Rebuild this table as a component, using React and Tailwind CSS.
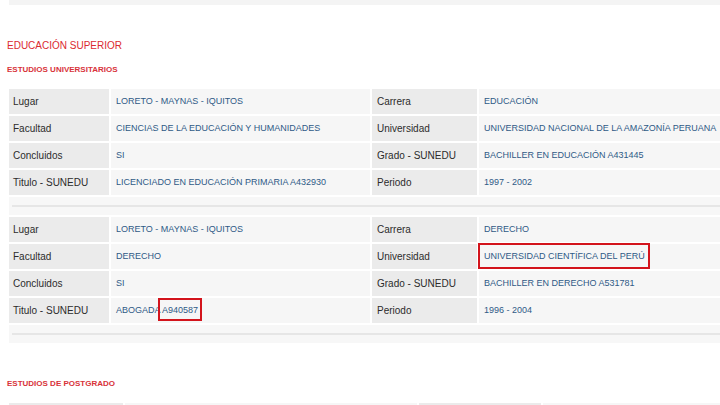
import React from "react";

const Label = ({ children, w, pl = "pl-[5px]" }) => (
  <div className={`${w} shrink-0 h-full bg-[#ebebeb] flex items-center ${pl} text-[10px] text-[#2b2b2b] whitespace-nowrap`}>
    {children}
  </div>
);

const Value = ({ children, w }) => (
  <div className={`${w} shrink-0 h-full bg-[#f6f6f6] flex items-center pl-[5px] text-[9px] text-[#2f5a86] whitespace-nowrap`}>
    {children}
  </div>
);

const Row = ({ l1, v1, l2, v2 }) => (
  <div className="flex gap-[2px] h-[25px]">
    <Label w="w-[100px]" pl="pl-[4px]">{l1}</Label>
    <Value w="w-[259px]">{v1}</Value>
    <Label w="w-[105px]">{l2}</Label>
    <Value w="w-[260px]">{v2}</Value>
  </div>
);

const Sep = () => (
  <div className="h-[18px] bg-[#f7f7f7] flex items-center pl-[3px]">
    <div className="h-[2px] w-full bg-[#e6e6e6]" />
  </div>
);

const Boxed = ({ children, cls }) => (
  <span className="relative">
    {children}
    <span className={`absolute border-2 border-[#d3141c] pointer-events-none ${cls}`} />
  </span>
);

export default function App() {
  return (
    <div className="w-[720px] h-[405px] overflow-hidden bg-white font-['Liberation_Sans',Arial,sans-serif]">
      <div className="ml-[9px] h-[5px] bg-[#f4f4f4]" />
      <div className="pl-[7px] mt-[35px] text-[10px] leading-[12px] text-[#db2a30]">
        EDUCACIÓN SUPERIOR
      </div>
      <div className="pl-[7px] mt-[13px] text-[8px] leading-[10px] font-bold text-[#d8333a]">
        ESTUDIOS UNIVERSITARIOS
      </div>
      <div className="ml-[9px] mt-[14px] flex flex-col gap-[2px]">
        <Row l1="Lugar" v1="LORETO - MAYNAS - IQUITOS" l2="Carrera" v2="EDUCACIÓN" />
        <Row l1="Facultad" v1="CIENCIAS DE LA EDUCACIÓN Y HUMANIDADES" l2="Universidad" v2="UNIVERSIDAD NACIONAL DE LA AMAZONÍA PERUANA" />
        <Row l1="Concluidos" v1="SI" l2="Grado - SUNEDU" v2="BACHILLER EN EDUCACIÓN A431445" />
        <Row l1="Titulo - SUNEDU" v1="LICENCIADO EN EDUCACIÓN PRIMARIA A432930" l2="Periodo" v2="1997 - 2002" />
        <Sep />
        <Row l1="Lugar" v1="LORETO - MAYNAS - IQUITOS" l2="Carrera" v2="DERECHO" />
        <Row
          l1="Facultad"
          v1="DERECHO"
          l2="Universidad"
          v2={<Boxed cls="left-[-6px] right-[-5px] top-[-7px] bottom-[-6px]">UNIVERSIDAD CIENTÍFICA DEL PERÚ</Boxed>}
        />
        <Row l1="Concluidos" v1="SI" l2="Grado - SUNEDU" v2="BACHILLER EN DERECHO A531781" />
        <Row
          l1="Titulo - SUNEDU"
          v1={<span>ABOGADA <Boxed cls="left-[-4px] right-[-4px] top-[-7px] bottom-[-6px]">A940587</Boxed></span>}
          l2="Periodo"
          v2="1996 - 2004"
        />
        <Sep />
      </div>
      <div className="pl-[7px] mt-[36px] text-[8px] leading-[10px] font-bold text-[#d8333a]">
        ESTUDIOS DE POSTGRADO
      </div>
      <div className="ml-[9px] mt-[14px] flex gap-[2px] h-[25px]">
        <div className="w-[128px] h-full bg-[#ebebeb]" />
        <div className="w-[330px] h-full bg-[#f6f6f6]" />
        <div className="w-[137px] h-full bg-[#ebebeb]" />
        <div className="w-[200px] h-full bg-[#f6f6f6]" />
      </div>
    </div>
  );
}
